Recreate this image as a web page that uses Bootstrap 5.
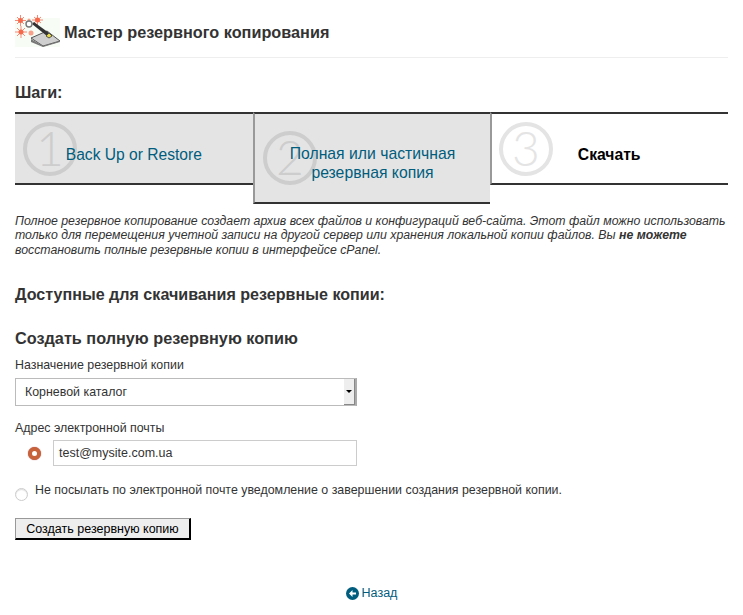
<!DOCTYPE html>
<html lang="ru">
<head>
  <meta charset="UTF-8">
  <title>Мастер резервного копирования</title>
  <link rel="stylesheet" href="https://cdn.jsdelivr.net/npm/bootstrap@5.3.0/dist/css/bootstrap.min.css">
  <style>
    body { font-family: "Liberation Sans", Arial, sans-serif; font-size: 12.4px; color: #333; background: #fff; }
    .page-wrap { padding: 0 15px; height: 615px; overflow: hidden; }
    .page-head { height: 58px; padding-top: 15px; border-bottom: 1px solid #eee; }
    .page-head h1 { font-size: 16.25px; font-weight: 700; margin: 1px 0 0 4px; line-height: 32px; color: #333; }
    .sect-title { font-size: 16.25px; font-weight: 700; line-height: 18px; color: #333; margin: 0; }
    .title-steps { margin-top: 25px; }
    .title-avail { margin-top: 28px; font-size: 16.1px; }
    .title-make { margin-top: 26px; }
    .steps-row { margin-top: 11px; height: 92px; display: grid; grid-template-columns: repeat(3, 1fr); align-items: start; }
    .step-box { position: relative; height: 73px; border-top: 2px solid #333; border-bottom: 2px solid #333; background: #e4e4e4; display: flex; align-items: center; justify-content: center; text-align: center; font-size: 15.6px; line-height: 19px; color: #005d7d; padding-top: 11px; }
    .step-box.is-active { height: 92px; border-left: 2px solid #999; padding: 14px 28px 4px 28px; font-size: 15.75px; }
    .step-box.is-current { background: #fff; border-left: 2px solid #999; color: #000; font-weight: 700; padding-right: 2px; font-size: 15.7px; }
    .step-box span { position: relative; }
    .step-num { position: absolute; left: 8px; top: 8px; width: 54px; height: 54px; font-weight: 400; overflow: visible; }
    .is-active .step-num { top: 17px; }
    .is-current .step-num { left: 7px; }
    .note-text { margin: 10px 0 0; font-style: italic; font-size: 12.3px; line-height: 14.4px; color: #333; }
    .note-text b { font-weight: 700; }
    .form-lbl { font-size: 12.4px; line-height: 14px; margin-bottom: 6px; display: block; color: #333; }
    .dest-wrap { margin-top: 11px; }
    .dest-select { width: 342px; height: 28px; border: 1px solid #bbb; border-right: 2px solid #aaa; position: relative; display: flex; align-items: center; padding-left: 9px; background: #fff; }
    .dest-arrow { position: absolute; right: 0; top: 0; bottom: 0; width: 11px; background: #eee; border-bottom: 1px solid #888; border-right: 1px solid #888; display: flex; align-items: center; justify-content: center; }
    .dest-arrow::after { content: ""; border-left: 3px solid transparent; border-right: 3px solid transparent; border-top: 3px solid #000; }
    .mail-wrap { margin-top: 15px; }
    .mail-wrap .form-lbl { margin-bottom: 5px; }
    .mail-input { width: 304px; height: 26px; border: 1px solid #ccc; padding: 0 5px; font-size: 12.5px; line-height: 24px; color: #333; }
    .radio-on { width: 13px; height: 13px; margin: 0 12px 0 13px; border-radius: 50%; background: #c8623a; display: flex; align-items: center; justify-content: center; box-shadow: 0 0 1px #a44; }
    .radio-on::after { content: ""; width: 5px; height: 5px; border-radius: 50%; background: #fff; }
    .nomail-row { margin-top: 17px; gap: 7px; }
    .nomail-row div:last-child { line-height: 14px; }
    .radio-off { width: 13px; height: 13px; border-radius: 50%; border: 1px solid #ccc; background: #fff; box-shadow: inset 0 1px 1px #ddd; margin-top: 5px; flex: none; }
    .make-btn { display: block; margin-top: 17px; width: 176px; height: 22px; padding: 0; font-size: 12.5px; line-height: 18px; color: #000; background: #eee; border-style: solid; border-width: 1px 2px 2px 1px; border-color: #999 #000 #000 #999; border-radius: 0; }
    .back-row { margin-top: 46px; gap: 3px; }
    .back-link { color: #005d7d; text-decoration: none; font-size: 12.5px; line-height: 14px; }
  </style>
</head>
<body>
<div class="page-wrap">

  <div class="page-head d-flex align-items-start">
    <svg width="45" height="32" viewBox="0 0 45 32">
      <rect x="0" y="3" width="45" height="29" fill="#f7fcf5"/>
      <g stroke="#f98a78" stroke-width="1">
        <path d="M0 5.500h11M5.500 0v11M2 2l7 7M9 2l-7 7"/>
        <path d="M17 5h11M22.500 0v10M19 2l7 6M26 2l-7 6"/>
        <path d="M0 17h12M6 11v12M2 13l8 8M10 13l-8 8"/>
      </g>
      <circle cx="5.500" cy="5.500" r="2.500" fill="#f66a4c"/>
      <circle cx="22.500" cy="5" r="2.500" fill="#f66a4c"/>
      <circle cx="6" cy="17" r="2.500" fill="#f66a4c"/>
      <circle cx="14" cy="5" r="1.500" fill="#f9a08a"/>
      <circle cx="16" cy="18" r="2.500" fill="#f9a08a"/>
      <path d="M16 23l16-7 13 10-17 5z" fill="#cfcfcf" stroke="#555"/>
      <path d="M16 24v3l12 5 17-5v-1l-17 5z" fill="#777"/>
      <path d="M17 9l2-2 15 11-2 3z" fill="#333"/>
      <circle cx="14" cy="9" r="3" fill="#fff" stroke="#777" stroke-width="1.400"/>
      <path d="M31 21l3-3 3 3-3 2z" fill="#e6d94a" stroke="#554"/>
    </svg>
    <h1>Мастер резервного копирования</h1>
  </div>

  <h2 class="sect-title title-steps">Шаги:</h2>

  <div class="steps-row">
    <div class="step-box">
      <svg class="step-num" viewBox="0 0 54 54"><circle cx="27" cy="27" r="25" fill="none" stroke="#cdcdcd" stroke-width="4"/><text x="27" y="44" text-anchor="middle" font-family="Lato" font-weight="300" font-size="48" fill="#cdcdcd">1</text></svg>
      <span>Back Up or Restore</span>
    </div>
    <div class="step-box is-active">
      <svg class="step-num" viewBox="0 0 54 54"><circle cx="27" cy="27" r="25" fill="none" stroke="#cdcdcd" stroke-width="4"/><text x="27" y="44" text-anchor="middle" font-family="Lato" font-weight="300" font-size="48" fill="#cdcdcd">2</text></svg>
      <span>Полная или частичная резервная копия</span>
    </div>
    <div class="step-box is-current">
      <svg class="step-num" viewBox="0 0 54 54"><circle cx="27" cy="27" r="25" fill="none" stroke="#e4e4e4" stroke-width="4"/><text x="27" y="44" text-anchor="middle" font-family="Lato" font-weight="300" font-size="48" fill="#e4e4e4">3</text></svg>
      <span>Скачать</span>
    </div>
  </div>

  <p class="note-text">Полное резервное копирование создает архив всех файлов и конфигураций веб-сайта. Этот файл можно использовать только для перемещения учетной записи на другой сервер или хранения локальной копии файлов. Вы <b>не можете</b> восстановить полные резервные копии в интерфейсе cPanel.</p>

  <h2 class="sect-title title-avail">Доступные для скачивания резервные копии:</h2>
  <h2 class="sect-title title-make">Создать полную резервную копию</h2>

  <div class="dest-wrap">
    <label class="form-lbl">Назначение резервной копии</label>
    <div class="dest-select">Корневой каталог<div class="dest-arrow"></div></div>
  </div>

  <div class="mail-wrap">
    <label class="form-lbl">Адрес электронной почты</label>
    <div class="d-flex align-items-center">
      <div class="radio-on"></div>
      <div class="mail-input">test@mysite.com.ua</div>
    </div>
  </div>

  <div class="d-flex nomail-row">
    <div class="radio-off"></div>
    <div>Не посылать по электронной почте уведомление о завершении создания резервной копии.</div>
  </div>

  <button class="make-btn" type="button">Создать резервную копию</button>

  <div class="d-flex justify-content-center align-items-center back-row">
    <svg width="13" height="13" viewBox="0 0 13 13"><circle cx="6.500" cy="6.500" r="6.500" fill="#005d7d"/><path d="M10 5.500H6.500V3L3 6.500 6.500 10V7.500H10z" fill="#fff"/></svg>
    <a href="#" class="back-link">Назад</a>
  </div>
</div>
<script src="https://cdn.jsdelivr.net/npm/bootstrap@5.3.0/dist/js/bootstrap.bundle.min.js"></script>
</body>
</html>
